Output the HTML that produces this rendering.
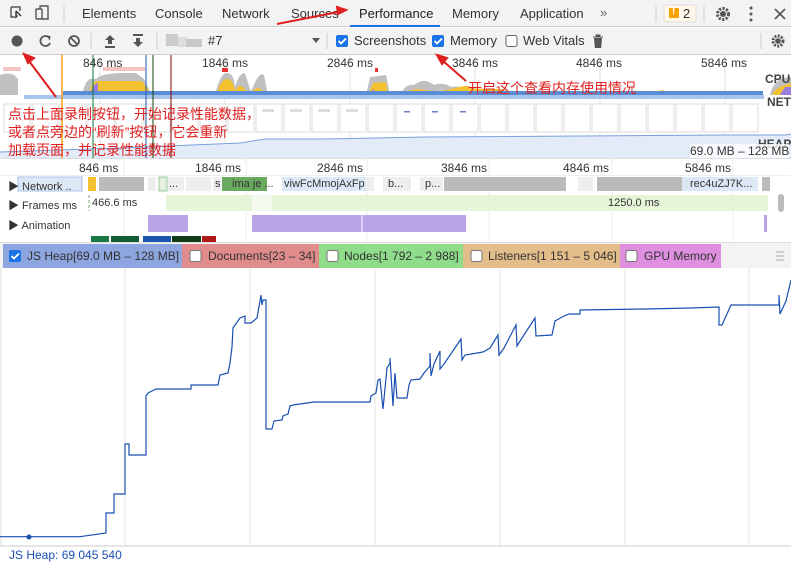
<!DOCTYPE html>
<html><head><meta charset="utf-8"><style>
*{margin:0;padding:0;box-sizing:border-box}
body{width:791px;height:566px;overflow:hidden;background:#fff;font-family:"Liberation Sans","Noto Sans CJK SC",sans-serif;font-size:12px;color:#333;position:relative}
.a{position:absolute}
.t{position:absolute;white-space:nowrap}
.red{color:#e02020;font-size:14px;font-family:"Liberation Sans","Noto Sans CJK SC",sans-serif}
</style></head><body>
<!-- tab bar -->
<div class="a" style="left:0;top:0;width:791px;height:27px;background:#f3f3f3;border-bottom:1px solid #ccc"></div>
<svg class="a" style="left:0;top:0" width="791" height="28">
<g fill="none" stroke="#555" stroke-width="1.4">
<path d="M11 7h9v4M11 7v10h4"/><path d="M16 11l5 5M16 11v6l1.5-1.5" stroke="#333"/>
<rect x="36" y="9" width="6" height="10" rx="1"/><path d="M40 9V6h8v13h-6"/>
</g>
<line x1="64" y1="6" x2="64" y2="22" stroke="#ccc"/>
<rect x="350" y="25" width="90" height="2" fill="#1a73e8"/>
<line x1="656" y1="6" x2="656" y2="22" stroke="#ccc"/>
<rect x="664" y="5" width="32" height="17" rx="2" fill="#fff8e6" stroke="#ddd"/>
<rect x="669" y="8" width="10" height="10" rx="1" fill="#f4a300"/>
<line x1="704" y1="6" x2="704" y2="22" stroke="#ccc"/>
<circle cx="723" cy="14" r="5.5" fill="none" stroke="#555" stroke-width="3" stroke-dasharray="2.2 1.4"/><circle cx="723" cy="14" r="3" fill="#555"/>
<circle cx="751" cy="8" r="1.5" fill="#555"/><circle cx="751" cy="14" r="1.5" fill="#555"/><circle cx="751" cy="20" r="1.5" fill="#555"/>
<path d="M775 9l10 10M785 9l-10 10" stroke="#555" stroke-width="1.6"/>
</svg>
<div class="t" style="left:82px;top:6px;font-size:13px">Elements</div>
<div class="t" style="left:155px;top:6px;font-size:13px">Console</div>
<div class="t" style="left:222px;top:6px;font-size:13px">Network</div>
<div class="t" style="left:291px;top:6px;font-size:13px">Sources</div>
<div class="t" style="left:359px;top:6px;font-size:13px;color:#222">Performance</div>
<div class="t" style="left:452px;top:6px;font-size:13px">Memory</div>
<div class="t" style="left:520px;top:6px;font-size:13px">Application</div>
<div class="t" style="left:600px;top:5px;font-size:13px;color:#666">»</div>
<div class="t" style="left:683px;top:6px;font-size:13px">2</div>
<div class="t" style="left:672px;top:6px;font-size:10px;color:#fff;font-weight:bold">!</div>
<!-- toolbar -->
<div class="a" style="left:0;top:28px;width:791px;height:27px;background:#f3f3f3;border-bottom:1px solid #ccc"></div>
<svg class="a" style="left:0;top:28px" width="791" height="27">
<circle cx="17" cy="13" r="5.5" fill="#555"/>
<path d="M49 9.5A5 5 0 1 0 50 15" fill="none" stroke="#555" stroke-width="1.8"/><path d="M46 7.5l4.5 0.5-0.5 4.5z" fill="#555"/>
<circle cx="74" cy="13" r="5" fill="none" stroke="#555" stroke-width="1.8"/><path d="M70.5 9.5l7 7" stroke="#555" stroke-width="1.8"/>
<line x1="91" y1="5" x2="91" y2="21" stroke="#ccc"/>
<path d="M110 7l-5 5h3v4h4v-4h3z M105 18h10v2h-10z" fill="#555"/>
<path d="M138 19l-5-5h3v-4h4v4h3z M133 6h10v2h-10z" fill="#555"/>
<line x1="157" y1="5" x2="157" y2="21" stroke="#ccc"/>
<rect x="166" y="6" width="12" height="12" fill="#ccc"/><rect x="178" y="9" width="10" height="10" fill="#ddd"/><rect x="186" y="11" width="16" height="8" fill="#c8c8c8"/>
<path d="M312 10h8l-4 5z" fill="#555"/>
<line x1="327" y1="5" x2="327" y2="21" stroke="#ccc"/>
<rect x="336" y="7" width="12" height="12" rx="2" fill="#1a73e8"/><path d="M338.5 13l2.5 2.5 5-5" stroke="#fff" stroke-width="1.8" fill="none"/>
<rect x="432" y="7" width="12" height="12" rx="2" fill="#1a73e8"/><path d="M434.5 13l2.5 2.5 5-5" stroke="#fff" stroke-width="1.8" fill="none"/>
<rect x="506" y="7.5" width="11" height="11" rx="2" fill="#fff" stroke="#666"/>
<path d="M593 9h10M596 9V7h4v2M594.5 10.5h7l-.8 9h-5.4z" fill="#555" stroke="#555"/>
<line x1="761" y1="5" x2="761" y2="21" stroke="#ccc"/>
<circle cx="778" cy="13" r="5" fill="none" stroke="#555" stroke-width="3" stroke-dasharray="2 1.3"/><circle cx="778" cy="13" r="2.8" fill="#555"/>
</svg>
<div class="t" style="left:208px;top:33px;font-size:13px">#7</div>
<div class="t" style="left:354px;top:33px;font-size:13px">Screenshots</div>
<div class="t" style="left:450px;top:33px;font-size:13px">Memory</div>
<div class="t" style="left:523px;top:33px;font-size:13px">Web Vitals</div>
<!-- overview -->
<svg class="a" style="left:0;top:55px" width="791" height="103">
<g stroke="#e0e0e0"><line x1="100" y1="0" x2="100" y2="103"/><line x1="225" y1="0" x2="225" y2="103"/><line x1="350" y1="0" x2="350" y2="103"/><line x1="475" y1="0" x2="475" y2="103"/><line x1="600" y1="0" x2="600" y2="103"/><line x1="725" y1="0" x2="725" y2="103"/></g>
<rect x="3" y="12" width="18" height="4" fill="#f4c4c4"/><rect x="103" y="12" width="42" height="4" fill="#f4c4c4"/>
<rect x="222" y="13" width="6" height="4" fill="#e33"/><rect x="375" y="13" width="3" height="4" fill="#e33"/>
<path d="M0 40V20q8-3 14 0l4 4V40zM82 40q3-14 8-16l6 0q6-7 40-6l8 6 8 16zM215 40q5-22 12-22t8 14q4-14 10-14l5 16 5 6zM250 40q8-24 14-20l4 20zM300 40q5-8 10 0zM366 40l4-18 16-2 4 20zM400 40q6-12 14-10q10-8 20 0 10-4 20 4zM440 40q5-10 20-8 10-3 20 4l10 4zM770 40q4-18 21-18V40z" fill="#c0c0c0"/>
<path d="M88 40q4-14 9-14l45 0 10 14zM216 40q5-16 11-16t8 12q5-10 11 0zM250 40q9-14 14 0zM368 40l5-12 13-1 2 13zM400 40q12-8 25-5t30 -2 20 3 12 2zM440 40q10-8 60-6l20 6zM480 40q6-6 12 0zM590 40q20-3 40 0zM656 40q6-10 12 0zM772 40q3-8 19-12V40z" fill="#f2c130"/>
<path d="M90 40q3-12 8-12v12zM226 40q3-8 6 0zM370 40l3-6 4 6zM780 40l5-8 6 0v8z" fill="#9a7fe0"/>
<rect x="63" y="36" width="700" height="4" fill="#5a8dd6"/>
<rect x="24" y="40" width="740" height="4" fill="#a8c4ea"/>
<g fill="#fff" stroke="#ddd">
<rect x="4" y="49" width="26" height="28"/><rect x="32" y="49" width="26" height="28"/><rect x="60" y="49" width="26" height="28"/><rect x="88" y="49" width="26" height="28"/><rect x="116" y="49" width="26" height="28"/><rect x="144" y="49" width="26" height="28"/><rect x="172" y="49" width="26" height="28"/><rect x="200" y="49" width="26" height="28"/><rect x="228" y="49" width="26" height="28"/><rect x="256" y="49" width="26" height="28"/><rect x="284" y="49" width="26" height="28"/><rect x="312" y="49" width="26" height="28"/><rect x="340" y="49" width="26" height="28"/><rect x="368" y="49" width="26" height="28"/><rect x="396" y="49" width="26" height="28"/><rect x="424" y="49" width="26" height="28"/><rect x="452" y="49" width="26" height="28"/><rect x="480" y="49" width="26" height="28"/><rect x="508" y="49" width="26" height="28"/><rect x="536" y="49" width="26" height="28"/><rect x="564" y="49" width="26" height="28"/><rect x="592" y="49" width="26" height="28"/><rect x="620" y="49" width="26" height="28"/><rect x="648" y="49" width="26" height="28"/><rect x="676" y="49" width="26" height="28"/><rect x="704" y="49" width="26" height="28"/><rect x="732" y="49" width="26" height="28"/>
</g>
<g fill="#ddd"><rect x="262" y="54" width="12" height="3"/><rect x="290" y="54" width="12" height="3"/><rect x="318" y="54" width="12" height="3"/><rect x="346" y="54" width="12" height="3"/></g>
<g fill="#6a7fc8"><rect x="404" y="56" width="6" height="1.5"/><rect x="432" y="56" width="6" height="1.5"/><rect x="460" y="56" width="6" height="1.5"/></g>
<path d="M0 103V97l120-4 120-5 25-4 60 0 100-2 300-2 60 0 26-4V103z" fill="#e3ebf8"/>
<path d="M0 97l120-4 120-5 25-4 60 0 100-2 300-2 60 0 26-4" fill="none" stroke="#7a9fdc"/>
<line x1="62" y1="0" x2="62" y2="103" stroke="#f29900" stroke-width="1.4"/>
<line x1="93" y1="0" x2="93" y2="103" stroke="#0b7a3a"/>
<line x1="146" y1="0" x2="146" y2="103" stroke="#1a56b0"/>
<line x1="153" y1="0" x2="153" y2="103" stroke="#114411"/>
<line x1="171" y1="0" x2="171" y2="103" stroke="#8b0000"/>
</svg>
<div class="t" style="left:83px;top:56px">846 ms</div>
<div class="t" style="left:202px;top:56px">1846 ms</div>
<div class="t" style="left:327px;top:56px">2846 ms</div>
<div class="t" style="left:452px;top:56px">3846 ms</div>
<div class="t" style="left:576px;top:56px">4846 ms</div>
<div class="t" style="left:701px;top:56px">5846 ms</div>
<div class="t" style="left:765px;top:72px;font-weight:bold;color:#444">CPU</div>
<div class="t" style="left:767px;top:95px;font-weight:bold;color:#444">NET</div>
<div class="t" style="left:758px;top:137px;font-weight:bold;color:#444">HEAP</div>
<div class="t" style="left:690px;top:144px;background:rgba(255,255,255,.8);font-size:12px">69.0 MB – 128 MB</div>
<!-- ruler -->
<div class="a" style="left:0;top:158px;width:791px;height:18px;border-top:1px solid #ddd;border-bottom:1px solid #eee"></div>
<svg class="a" style="left:0;top:158px" width="791" height="84"><g stroke="#eee"><line x1="124" y1="0" x2="124" y2="84"/><line x1="246" y1="0" x2="246" y2="84"/><line x1="367" y1="0" x2="367" y2="84"/><line x1="489" y1="0" x2="489" y2="84"/><line x1="612" y1="0" x2="612" y2="84"/><line x1="733" y1="0" x2="733" y2="84"/></g>
<g>
<rect x="18" y="19" width="64" height="14" fill="#dde8f6" stroke="#a8c4ea"/>
<rect x="88" y="19" width="8" height="14" fill="#f2c130"/>
<rect x="99" y="19" width="45" height="14" fill="#bbb"/>
<rect x="148" y="19" width="8" height="14" fill="#eee"/><rect x="159" y="19" width="8" height="14" fill="#e6f0de" stroke="#9c9"/>
<rect x="168" y="19" width="16" height="14" fill="#eee"/><rect x="186" y="19" width="25" height="14" fill="#eee"/>
<rect x="213" y="19" width="8" height="14" fill="#eee"/><rect x="222" y="19" width="45" height="14" fill="#6aaa5e"/>
<rect x="282" y="19" width="84" height="14" fill="#dde8f6"/>
<rect x="366" y="19" width="8" height="14" fill="#eee"/><rect x="383" y="19" width="28" height="14" fill="#eee"/>
<rect x="420" y="19" width="23" height="14" fill="#eee"/>
<rect x="444" y="19" width="122" height="14" fill="#bbb"/>
<rect x="578" y="19" width="15" height="14" fill="#eee"/>
<rect x="597" y="19" width="85" height="14" fill="#bbb"/>
<rect x="682" y="19" width="76" height="14" fill="#dde8f6"/>
<rect x="762" y="19" width="8" height="14" fill="#bbb"/>
</g>
<rect x="148" y="37" width="620" height="16" fill="#e6f4d8"/>
<rect x="148" y="37" width="18" height="16" fill="#fff"/><rect x="252" y="37" width="20" height="16" fill="#f4faee"/>
<line x1="89" y1="37" x2="89" y2="53" stroke="#7a7" stroke-dasharray="3 2"/>
<rect x="148" y="57" width="40" height="17" fill="#b9a4e8"/>
<rect x="252" y="57" width="214" height="17" fill="#b9a4e8"/>
<line x1="362" y1="57" x2="362" y2="74" stroke="#fff"/>
<rect x="764" y="57" width="3" height="17" fill="#b9a4e8"/>
<rect x="91" y="78" width="18" height="6" fill="#1b7a44"/><rect x="111" y="78" width="28" height="6" fill="#145c33"/>
<rect x="143" y="78" width="28" height="6" fill="#1a56b0"/><rect x="172" y="78" width="29" height="6" fill="#103d18"/><rect x="202" y="78" width="14" height="6" fill="#b01818"/>
<rect x="778" y="36" width="6" height="18" rx="3" fill="#bbb"/>
</svg>
<div class="t" style="left:79px;top:161px">846 ms</div>
<div class="t" style="left:195px;top:161px">1846 ms</div>
<div class="t" style="left:317px;top:161px">2846 ms</div>
<div class="t" style="left:441px;top:161px">3846 ms</div>
<div class="t" style="left:563px;top:161px">4846 ms</div>
<div class="t" style="left:685px;top:161px">5846 ms</div>
<div class="t" style="left:8px;top:178px;font-size:11px">▶ Network ..</div>
<div class="t" style="left:169px;top:178px;font-size:11px">...</div>
<div class="t" style="left:215px;top:178px;font-size:11px">s</div>
<div class="t" style="left:232px;top:178px;font-size:11px">ima je ...</div>
<div class="t" style="left:284px;top:178px;font-size:11px">viwFcMmojAxFp</div>
<div class="t" style="left:388px;top:178px;font-size:11px">b...</div>
<div class="t" style="left:425px;top:178px;font-size:11px">p...</div>
<div class="t" style="left:690px;top:178px;font-size:11px">rec4uZJ7K...</div>
<div class="t" style="left:8px;top:197px;font-size:11px">▶ Frames ms</div>
<div class="t" style="left:92px;top:197px;font-size:11px">466.6 ms</div>
<div class="t" style="left:608px;top:197px;font-size:11px">1250.0 ms</div>
<div class="t" style="left:8px;top:217px;font-size:11px">▶ Animation</div>
<!-- legend -->
<div class="a" style="left:0;top:242px;width:791px;height:26px;background:#f3f3f3;border-top:1px solid #ddd"></div>
<div class="a" style="left:3px;top:244px;width:179px;height:24px;background:#8ea6e0"></div>
<div class="a" style="left:182px;top:244px;width:137px;height:24px;background:#e08c8c"></div>
<div class="a" style="left:319px;top:244px;width:144px;height:24px;background:#8fdc8a"></div>
<div class="a" style="left:463px;top:244px;width:157px;height:24px;background:#e3bd8a"></div>
<div class="a" style="left:620px;top:244px;width:101px;height:24px;background:#df8fe0"></div>
<svg class="a" style="left:0;top:244px" width="791" height="24">
<rect x="9" y="6" width="12" height="12" rx="2" fill="#1a73e8"/><path d="M11.5 12l2.5 2.5 5-5" stroke="#fff" stroke-width="1.8" fill="none"/>
<rect x="190" y="6.5" width="11" height="11" rx="2" fill="#fff" stroke="#777"/>
<rect x="327" y="6.5" width="11" height="11" rx="2" fill="#fff" stroke="#777"/>
<rect x="471" y="6.5" width="11" height="11" rx="2" fill="#fff" stroke="#777"/>
<rect x="626" y="6.5" width="11" height="11" rx="2" fill="#fff" stroke="#777"/>
<path d="M776 8h8M776 12h8M776 16h8" stroke="#aaa"/>
</svg>
<div class="t" style="left:27px;top:249px;color:#333">JS Heap[69.0 MB – 128 MB]</div>
<div class="t" style="left:208px;top:249px;color:#333">Documents[23 – 34]</div>
<div class="t" style="left:344px;top:249px;color:#333">Nodes[1 792 – 2 988]</div>
<div class="t" style="left:488px;top:249px;color:#333">Listeners[1 151 – 5 046]</div>
<div class="t" style="left:644px;top:249px;color:#333">GPU Memory</div>
<!-- graph -->
<svg class="a" style="left:0;top:268px" width="791" height="298">
<g stroke="#e4e4e4"><line x1="125" y1="0" x2="125" y2="278"/><line x1="250" y1="0" x2="250" y2="278"/><line x1="375" y1="0" x2="375" y2="278"/><line x1="500" y1="0" x2="500" y2="278"/><line x1="625" y1="0" x2="625" y2="278"/><line x1="749" y1="0" x2="749" y2="278"/></g>
<line x1="0" y1="278" x2="791" y2="278" stroke="#ccc"/>
<line x1="1" y1="0" x2="1" y2="278" stroke="#ddd"/>
<g transform="translate(0,-268)">
<polyline fill="none" stroke="#1a4fb0" stroke-width="1.2" points="0,536.7 80,536.7 106,533 106,513 114,513 114,494 125,494 125,444 129,444 129,455 146,455 146,396 148,393 150,392 156,389 191,389 191,385 218,385 220,375 228,373 230,363 232,347 233,328 240,318 245,316 245,323 251,323 257,318 261,295 262,305 263,300 266,300 266,429 272,429 274,421 282,420 283,416 288,414 290,406 293,405 314,402 370,402 371,396 376,393 378,380 380,379 382,399 383,409 387,368 390,363 390,358 393,406 395,373 397,398 407,398 409,385 411,380 420,379 424,373 430,366 430,353 431,376 434,364 440,351 440,369 444,364 461,339 462,360 465,355 483,352 490,348 498,335 499,355 504,348 516,325 517,346 522,338 535,318 536,336 552,335 555,321 564,316 569,314 580,314 580,310 645,309 690,308 719,307 719,325 722,325 731,305 766,305 779,305 779,295 780,314 786,301 791,280"/>
<circle cx="29" cy="537" r="2.5" fill="#1a4fb0"/>
</g>
</svg>
<div class="t" style="left:9px;top:548px;color:#1a4fb0;font-size:12px">JS Heap: 69 045 540</div>
<!-- annotations -->
<div class="t red" style="left:8px;top:105px;line-height:18px">点击上面录制按钮，开始记录性能数据，<br>或者点旁边的“刷新”按钮，它会重新<br>加载页面，并记录性能数据</div>
<div class="t red" style="left:468px;top:78px">开启这个查看内存使用情况</div>
<svg class="a" style="left:0;top:0" width="791" height="566">
<g stroke="#e02020" stroke-width="2" fill="#e02020">
<line x1="56" y1="97" x2="29" y2="61"/><path d="M24 54l10 4-6 5z"/>
<line x1="466" y1="81" x2="443" y2="61"/><path d="M437 55l10 3-5 6z"/>
<line x1="277" y1="24" x2="338" y2="12"/><path d="M346 10l-9-3 1 7z"/>
</g>
</svg>
</body></html>
